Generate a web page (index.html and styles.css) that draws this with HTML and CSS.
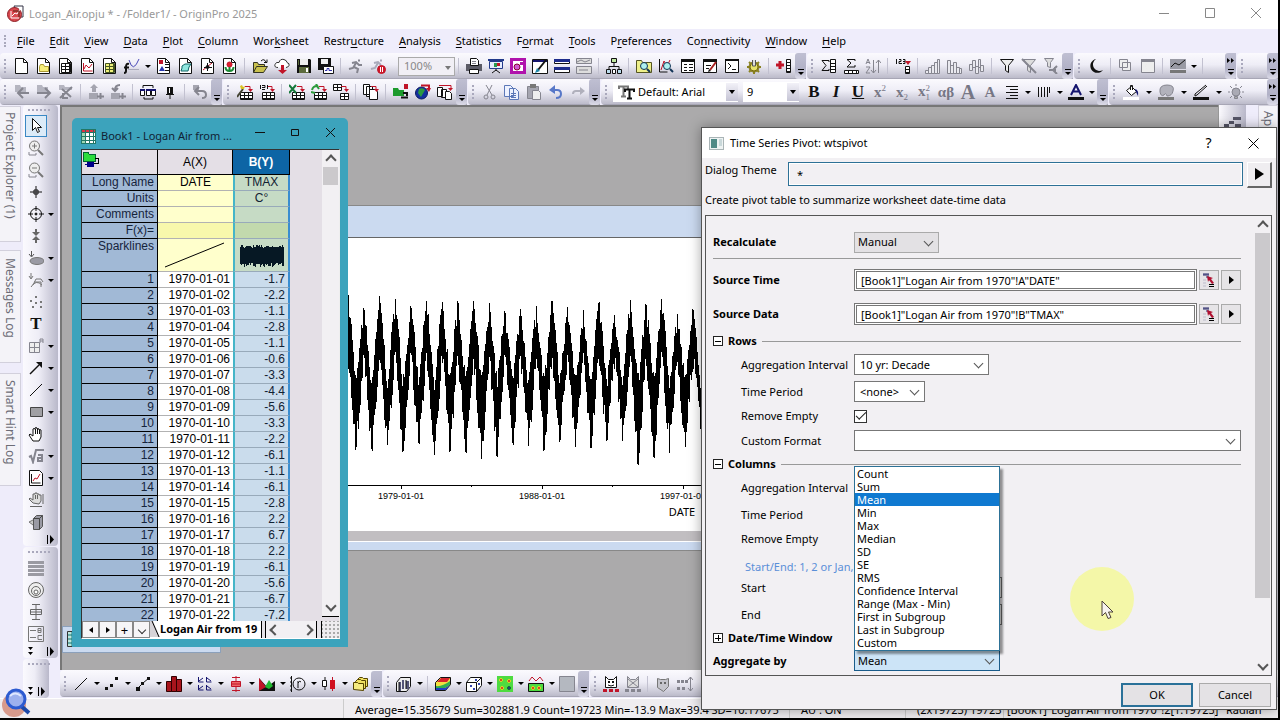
FILE: index.html
```html
<!DOCTYPE html>
<html lang="en">
<head>
<meta charset="utf-8">
<title>Logan_Air.opju * - /Folder1/ - OriginPro 2025</title>
<link rel="stylesheet" href="styles.css">
</head>
<body>
<div class="app">
  <header class="titlebar">
    <svg class="app-icon" width="17" height="18" viewBox="0 0 17 18" aria-hidden="true"><path d="M7 1h9v11h-5z" fill="#fff" stroke="#334"/><circle cx="7.500" cy="9.500" r="7" fill="#d8474d" stroke="#8d2028"/><path d="M4 6v7h8M5 11l3-3 2 1 3-5" fill="none" stroke="#fff"/><path d="M6 6h6v6" fill="none" stroke="#521"/></svg>
    <span class="title-text">Logan_Air.opju * - /Folder1/ - OriginPro 2025</span>
    <div class="window-buttons">
      <button aria-label="Minimize"><svg width="11" height="11"><path d="M0 5.500h10"/></svg></button>
      <button aria-label="Maximize"><svg width="11" height="11"><path d="M.5.5h9v9h-9z"/></svg></button>
      <button aria-label="Close"><svg width="11" height="11"><path d="M0 0l10 10M10 0L0 10"/></svg></button>
    </div>
  </header>

  <nav class="menubar">
    <a href="#"><u>F</u>ile</a><a href="#"><u>E</u>dit</a><a href="#"><u>V</u>iew</a><a href="#"><u>D</u>ata</a><a href="#"><u>P</u>lot</a><a href="#"><u>C</u>olumn</a><a href="#">Wor<u>k</u>sheet</a><a href="#">Restr<u>u</u>cture</a><a href="#"><u>A</u>nalysis</a><a href="#"><u>S</u>tatistics</a><a href="#">F<u>o</u>rmat</a><a href="#"><u>T</u>ools</a><a href="#">P<u>r</u>eferences</a><a href="#">Co<u>n</u>nectivity</a><a href="#"><u>W</u>indow</a><a href="#"><u>H</u>elp</a>
  </nav>

  <div class="toolbar-row">
    <div class="bar">
      <span class="tools" data-tools="new folder table graph ytable func* layout notes matrix image | open cloud save saveas | run stop"></span>
      <span class="combo zoom-combo"><select aria-label="Zoom" disabled><option>100%</option></select></span>
      <span class="tools" data-tools="| print slide magenta brush split graysplit | tree | findfolder findgraph sheet sheetedit prompt gear | addcol"></span>
      <button class="cap" aria-label="Toolbar options"></button>
    </div>
    <div class="bar">
      <span class="tools" data-tools="sumcol sumrow sortaz | numcol | bars1 bars2 bars3 | filter nofilter refilter"></span>
      <button class="cap" aria-label="Toolbar options"></button>
    </div>
    <div class="bar clipped">
      <span class="tools" data-tools="moon | moonpages moonwin | theme* |"></span>
      <button class="cap more" aria-label="More tools"></button>
    </div>
    <div class="bar rest"><button class="cap more" aria-label="More tools"></button></div>
  </div>

  <div class="toolbar-row">
    <div class="bar">
      <span class="tools" data-tools="back forward upfolder | addup adddown | linkwin pin | return"></span>
      <button class="cap" aria-label="Toolbar options"></button>
    </div>
    <div class="bar">
      <span class="tools" data-tools="wizard import123 | excel refresh database | pages | connector globe clonepages"></span>
      <button class="cap" aria-label="Toolbar options"></button>
    </div>
    <div class="bar">
      <span class="tools" data-tools="cut copy paste undo redo"></span>
      <button class="cap" aria-label="Toolbar options"></button>
    </div>
    <div class="bar">
      <span class="combo font-combo"><svg width="18" height="16" viewBox="0 0 18 16" aria-hidden="true"><path d="M1 5V2.500h9V5M5.500 3v9M3 12.500h5" fill="none" stroke="#777" stroke-width="2"/><path d="M7 8V5.500h9V8M11.500 6v8M9 14.500h5" fill="none" stroke="#111" stroke-width="2"/></svg><select aria-label="Font"><option>Default: Arial</option></select></span>
      <span class="combo size-combo"><select aria-label="Font size"><option>9</option></select></span>
      <span class="tools" data-tools="bold italic underline sup sub supsub greek bigger smaller align* vlines* fontcolor*"></span>
      <button class="cap" aria-label="Toolbar options"></button>
    </div>
    <div class="bar rest roomy">
      <span class="tools" data-tools="bucket* palette* pen* bulb"></span>
      <button class="cap more" aria-label="More tools"></button>
    </div>
  </div>

  <main class="workspace">
    <aside class="dock-tabs">
      <button class="t1">Project Explorer (1)</button>
      <button class="t2">Messages Log</button>
      <button class="t3">Smart Hint Log</button>
    </aside>
    <aside class="side-tools">
      <div class="vbar" data-tools="cursor zoomin zoomout cross target* squeeze mask* masklines* dots text annot* arrow* line* rect* hand sqrt* chart* handgray cube"><span class="vcap"><svg width="8" height="9"><path d="M1.500 0v9" stroke="#000"/><path d="M4 0l4 4.500L4 9z"/></svg></span></div>
      <div class="vbar" data-tools="stripes rings box bc"><span class="vcap both"><svg width="6" height="9"><path d="M0 0h5L2.500 3zM0 5h5L2.500 8z"/></svg><svg width="8" height="9"><path d="M1.500 0v9" stroke="#000"/><path d="M4 0l4 4.500L4 9z"/></svg></span></div>
      <div class="vbar short"><span class="vcap both"><svg width="6" height="9"><path d="M0 0h5L2.500 3zM0 5h5L2.500 8z"/></svg><svg width="8" height="9"><path d="M1.500 0v9" stroke="#000"/><path d="M4 0l4 4.500L4 9z"/></svg></span></div>
    </aside>
    <section class="center">
      <div class="desk">
        <div class="mdi">
          <div class="graph-window">
            <div class="graph-title"></div>
            <div class="graph-page">
              <svg id="plot" width="356" height="293" viewBox="0 0 356 293" role="img" aria-label="Daily maximum temperature against date"></svg>
            </div>
            <div class="graph-foot"></div>
          </div>
          <div class="minimized"><svg width="14" height="16"><path d="M.5.5h13v15H.5z" fill="#bfe6dc" stroke="#333"/><path d="M1 4h12M1 8h12M1 12h12M5 1v14" stroke="#177"/></svg></div>
        </div>
        <div class="right-dock"><div class="right-tools"><svg width="18" height="12" viewBox="0 0 18 12"><path d="M0 8h5v3H0zM5 5h5v3H5zM9 1h8v3H9zM11 8h6v3h-6z" fill="#556"/></svg></div><button class="right-tab">Ap</button></div>
      </div>
      <div class="toolbar-row bottom">
        <div class="bar narrow">
          <span class="tools" data-tools="line* scatter* linesym* columns* multi* boxred* area* polar* candle* stack"></span>
          <button class="cap" aria-label="Toolbar options"></button>
        </div>
        <div class="bar narrow">
          <span class="tools" data-tools="bars3d* | surface* scatter3d* contour* profile* grayimg"></span>
          <button class="cap" aria-label="Toolbar options"></button>
        </div>
        <div class="bar rest">
          <span class="tools" data-tools="cat graycat | shield measure"></span>
        </div>
      </div>
    </section>
  </main>

  <footer class="status">
    <svg class="orb" width="32" height="30" viewBox="0 0 32 30" aria-hidden="true"><circle cx="14" cy="17" r="12" fill="#d79a8c"/><path d="M20 17l9 8" stroke="#1d49a8" stroke-width="4"/><circle cx="16" cy="11" r="9" fill="#9db1ee" stroke="#2d5bd0" stroke-width="3"/><path d="M10 8q5-5 11 0" stroke="#dfe8ff" stroke-width="2" fill="none"/></svg>
    <span class="stats">Average=15.35679 Sum=302881.9 Count=19723 Min=-13.9 Max=39.4 SD=10.17675</span>
    <span class="au">AU : ON</span>
    <span class="dims">(2x19723) 19723</span>
    <span class="range">[Book1]"Logan Air from 1970"!2[1:19723]</span>
    <span class="angle">Radian</span>
  </footer>
</div>

<section class="book" aria-label="Book1">
  <header class="book-title">
    <svg width="15" height="15" viewBox="0 0 15 15" shape-rendering="crispEdges"><path d="M0 0h15v15H0z" fill="#fff"/><path d="M0 0h15v3H0z" fill="#d34"/><path d="M0 3h4v12H0z" fill="#9fd8b4"/><path d="M0 3.500h15M0 7.500h15M0 11.500h15M4.500 0v15M8.500 0v15M12.500 0v15M.5.5h14v14H.5z" fill="none" stroke="#276"/></svg>
    <span>Book1 - Logan Air from ...</span>
    <div class="book-buttons">
      <button aria-label="Minimize"><svg width="11" height="11"><path d="M0 5.500h10"/></svg></button>
      <button aria-label="Maximize"><svg width="11" height="11"><path d="M1.500 2.500h7v6h-7z"/></svg></button>
      <button aria-label="Close"><svg width="11" height="11"><path d="M1 1l9 9M10 1l-9 9"/></svg></button>
    </div>
  </header>
  <div class="sheet">
    <div class="grid-area">
      <table>
        <colgroup><col class="c0"><col class="c1"><col class="c2"></colgroup>
        <thead><tr><th class="corner"><svg width="18" height="17" viewBox="0 0 18 17" shape-rendering="crispEdges"><path d="M1 2h5l1 2h6v7H1z" fill="#2bdc3c" stroke="#063"/><path d="M13 8h3v5h-5" fill="none" stroke="#000"/><path d="M5 12h6v4H5zM3 14h2" fill="#008" stroke="#008"/></svg></th><th>A(X)</th><th class="sel">B(Y)</th></tr></thead>
        <tbody id="rows">
          <tr class="meta"><th>Long Name</th><td>DATE</td><td>TMAX</td></tr>
          <tr class="meta"><th>Units</th><td></td><td>C°</td></tr>
          <tr class="meta"><th>Comments</th><td></td><td></td></tr>
          <tr class="meta fx"><th>F(x)=</th><td></td><td></td></tr>
          <tr class="meta spark"><th>Sparklines</th><td><svg width="72" height="30"><path d="M7 28L66 4" stroke="#000"/></svg></td><td><svg id="spark" width="54" height="30"></svg></td></tr>
        </tbody>
      </table>
      <div class="vscroll"><i class="chev up"></i><i class="thumb"></i><i class="chev down"></i></div>
    </div>
    <div class="sheet-tabs">
      <button aria-label="Previous sheet"><i class="tri left"></i></button><button aria-label="Next sheet"><i class="tri"></i></button><button aria-label="Add sheet">+</button><button aria-label="Sheet list"><i class="vee"></i></button>
      <a class="sheet-tab" href="#"><svg width="10" height="16"><path d="M0 0h3l7 16H0z" fill="#d6d3d8"/><path d="M2 0l7 16" stroke="#000" fill="none"/></svg>Logan Air from 19</a>
      <span class="hscroll"><i class="chev left"></i><i class="chev right"></i></span>
      <span class="grow"></span>
    </div>
  </div>
</section>

<section class="dialog" role="dialog" aria-label="Time Series Pivot: wtspivot">
  <header class="dialog-title">
    <svg width="15" height="13" shape-rendering="crispEdges"><path d="M.5.5h14v12H.5z" fill="#eef3f3" stroke="#a9b4b6"/><path d="M2 2h6v9H2z" fill="#4f8a86"/><path d="M10 2h3v7h-3z" fill="#c9d8da"/></svg>
    <span>Time Series Pivot: wtspivot</span>
    <button aria-label="Help">?</button>
    <button aria-label="Close"><svg width="11" height="11"><path d="M.5.5l10 10M10.500.5l-10 10" stroke="#000"/></svg></button>
  </header>
  <div class="theme-row">
    <label for="theme">Dialog Theme</label>
    <input id="theme" value="*">
    <button class="raised" aria-label="Theme menu"><i class="tri big"></i></button>
  </div>
  <p class="description">Create pivot table to summarize worksheet date-time data</p>
  <div class="panel">
    <form class="fields">
      <div class="row first"><label class="strong" for="recalc">Recalculate</label><span class="drop gray w85"><select id="recalc"><option>Manual</option></select></span></div>
      <div class="row tall"><label class="strong" for="stime">Source Time</label><span class="source"><input id="stime" value='[Book1]"Logan Air from 1970"!A"DATE"'><button type="button" aria-label="Select time range"><svg class="pick" width="14" height="16"><use href="#pick"/></svg></button><button type="button" aria-label="Time options"><i class="tri"></i></button></span></div>
      <div class="row tall"><label class="strong" for="sdata">Source Data</label><span class="source"><input id="sdata" value='[Book1]"Logan Air from 1970"!B"TMAX"'><button type="button" aria-label="Select data range"><svg class="pick" width="14" height="16"><use href="#pick"/></svg></button><button type="button" aria-label="Data options"><i class="tri"></i></button></span></div>
      <h2><button type="button" class="fold" aria-label="Collapse Rows"></button>Rows</h2>
      <div class="row sub"><label for="ragg">Aggregation Interval</label><span class="drop w135"><select id="ragg"><option>10 yr: Decade</option></select></span></div>
      <div class="row sub"><label for="rper">Time Period</label><span class="drop w71"><select id="rper"><option>&lt;none&gt;</option></select></span></div>
      <div class="row sub low"><label for="remp">Remove Empty</label><input type="checkbox" id="remp" checked></div>
      <div class="row sub"><label for="rfmt">Custom Format</label><span class="drop full"><select id="rfmt"><option></option></select></span></div>
      <h2><button type="button" class="fold" aria-label="Collapse Columns"></button>Columns</h2>
      <div class="row sub"><span>Aggregation Interval</span></div>
      <div class="row sub"><span>Time Period</span></div>
      <div class="row sub low"><span>Remove Empty</span></div>
      <div class="hint">Start/End: 1, 2 or Jan,</div>
      <div class="row sub"><label for="start">Start</label><input id="start" class="plain"></div>
      <div class="row sub"><label for="end">End</label><input id="end" class="plain"></div>
      <h2 class="bare"><button type="button" class="fold plus" aria-label="Expand Date/Time Window"></button>Date/Time Window</h2>
      <div class="row last"><label class="strong" for="aggby">Aggregate by</label>
        <span class="drop active w146"><select id="aggby"><option>Mean</option></select>
          <ul class="options" role="listbox"><li>Count</li><li>Sum</li><li class="on">Mean</li><li>Min</li><li>Max</li><li>Median</li><li>SD</li><li>SE</li><li>RMS</li><li>Confidence Interval</li><li>Range (Max - Min)</li><li>First in Subgroup</li><li>Last in Subgroup</li><li>Custom</li></ul>
        </span></div>
    </form>
    <div class="panel-scroll"><i class="chev up"></i><i class="thumb"></i><i class="chev down"></i></div>
  </div>
  <footer class="dialog-actions"><button class="ok">OK</button><button>Cancel</button></footer>
</section>

<div class="spotlight"><svg width="14" height="20" viewBox="0 0 14 20"><path d="M1 1v15l3.500-3.500 2.500 6 3-1-2.500-5.500H12z" fill="#f7f3ee" stroke="#4c4238"/></svg></div>

<svg width="0" height="0" class="defs" aria-hidden="true"><symbol id="pick" viewBox="0 0 14 16"><path d="M1 2h6M1 3h6M4 5h3" stroke="#226" fill="none"/><path d="M5 4l6 2-2 1 3 4-2 1-3-4-1 2z" fill="#b01030"/><path d="M7 12.500h5M7 14.500h5" stroke="#000"/><path d="M1 8h3M1 11h3M1 14h3" stroke="#bbc"/></symbol></svg>
<script src="app.js"></script>
</body>
</html>
```

FILE: styles.css
```css
* { box-sizing: border-box; }
body { margin: 0; font: 11px/16px "Noto Sans", "Open Sans", sans-serif; color: #000; background: #000; overflow: hidden; position: relative; }
button, input, select { font: inherit; color: inherit; margin: 0; padding: 0; border-radius: 0; }
button { border: 0; background: none; }
select { appearance: none; border: 0; background: none; outline: 0; }
a { color: inherit; text-decoration: none; }
.defs { position: absolute; }

.app { height: 100vh; display: flex; flex-direction: column; border-right: 2px solid #000; border-bottom: 2px solid #000; background: #efedf9; }
.titlebar { flex: 0 0 29px; display: flex; align-items: center; background: #fff; color: #999; padding: 0 16px 2px 7px; }
.title-text { margin-left: 5px; flex: 1; }
.window-buttons { display: flex; gap: 35px; }
.window-buttons button { width: 11px; height: 11px; display: flex; }
.window-buttons path { stroke: #888; fill: none; }

.menubar { flex: 0 0 24px; display: flex; align-items: center; gap: 15px; padding-left: 17px; background: #efedfb; position: relative; }
.menubar u { text-underline-offset: 2px; }
.menubar::before, .bar::before { content: ""; position: absolute; left: 4px; top: 6px; bottom: 6px; border-left: 2px dotted #a9a8bc; }

.toolbar-row { flex: 0 0 26px; display: flex; gap: 1px; background: #efedfb; }
.bar { position: relative; display: flex; align-items: center; padding-left: 11px; height: 26px; background: linear-gradient(#fbfafe, #eeedf6 45%, #bdbccb 95%, #9a99a8); border-radius: 4px 0 0 4px; }
.bar.rest { flex: 1 1 0; min-width: 0; overflow: hidden; }
.bar.rest .cap, .bar.clipped .cap { margin-left: auto; }
.bar.clipped { min-width: 162px; }
.tools { display: flex; align-items: center; }
.tool { width: 22px; height: 22px; display: flex; align-items: center; justify-content: center; flex: none; }
.arrow { width: 10px; height: 22px; flex: none; display: flex; align-items: center; justify-content: center; }
.narrow .arrow { width: 9px; }
.roomy .arrow { width: 13px; }
.arrow::after { content: ""; border: 3px solid transparent; border-top-color: #000; border-bottom: 0; }
.sep { width: 8px; height: 16px; flex: none; background: linear-gradient(#c2c1d0, #c2c1d0) 3px 0 / 1px 100% no-repeat; }
.cap { position: relative; width: 11px; height: 26px; flex: none; background: linear-gradient(#bfbfd2, #b1b1c6 60%, #dcdbe8); border-radius: 3px 0 3px 3px; }
.cap::before { content: ""; position: absolute; left: 3px; bottom: 9px; width: 6px; border-top: 1px solid #000; }
.cap::after { content: ""; position: absolute; left: 3px; bottom: 4px; border: 3px solid transparent; border-top-color: #000; border-bottom: 0; }
.cap svg { position: absolute; left: 2px; top: 5px; }
.glyph { font: bold 17px/18px "Liberation Serif", serif; color: #111; }
.glyph.dim { color: #777785; font-size: 15px; }
.glyph.i { font-style: italic; }
.glyph.u { text-decoration: underline; }
.glyph.big { font-size: 20px; }
.glyph small { font: 9px/9px "Liberation Serif", serif; }
.glyph small.low { vertical-align: -3px; }
.glyph small.high { vertical-align: 6px; }
.glyph .stack { display: inline-flex; flex-direction: column; vertical-align: middle; }

.combo { display: flex; height: 20px; background: #fff; position: relative; align-items: center; }
.combo select { width: 100%; height: 20px; }
.combo::after { content: ""; position: absolute; right: 0; top: 1px; bottom: 1px; width: 12px; background: linear-gradient(#f2f1f8, #c5c4d5); }
.combo::before { content: ""; position: absolute; z-index: 1; right: 3px; top: 8px; border: 3px solid transparent; border-top: 4px solid #000; border-bottom: 0; }
.zoom-combo { width: 57px; margin-left: 9px; border: 1px solid #aaa; background: #f1eff5; height: 19px; }
.zoom-combo select { padding-left: 5px; color: #888; opacity: 1; height: 17px; }
.zoom-combo::after { background: none; }
.zoom-combo::before { border-top-color: #777; }
.font-combo { width: 125px; margin-left: 1px; padding-left: 5px; }
.font-combo svg { flex: none; }
.font-combo select { padding-left: 2px; }
.size-combo { width: 56px; margin: 0 4px 0 5px; }
.size-combo select { padding-left: 4px; }

.workspace { flex: 1; min-height: 0; display: flex; }
.dock-tabs { flex: 0 0 23px; display: flex; flex-direction: column; background: #eeecfa; padding-top: 1px; }
.dock-tabs button, .right-tab { writing-mode: vertical-rl; font-size: 12px; color: #6c6c76; text-align: left; width: 21px; border: 1px solid #d2d0dc; border-left: 0; background: #f4f3f8; padding-top: 5px; }
.dock-tabs .t1 { height: 136px; }
.dock-tabs .t2 { height: 113px; margin-top: 8px; padding-top: 7px; }
.dock-tabs .t3 { height: 113px; margin-top: 10px; padding-top: 6px; }
.side-tools { flex: 0 0 37px; display: flex; flex-direction: column; gap: 1px; background: #efedfb; }
.vbar { width: 35px; padding: 10px 0 0 1px; position: relative; background: linear-gradient(90deg, #fbfafe, #eeedf6 45%, #b9b8ca); border-radius: 4px; }
.vbar::before { content: ""; position: absolute; left: 5px; width: 22px; top: 4px; border-top: 2px dotted #a9a8bc; }
.vbar .line { display: flex; height: 22px; }
.vbar .line .tool { margin-left: 1px; }
.vbar .line .arrow { width: 7px; }
.vbar .line .tool.on { border: 1px solid #3a88c4; background: #dcebf8; width: 22px; }
.vcap { display: flex; justify-content: flex-end; align-items: center; padding-right: 4px; height: 13px; }
.vcap.both { justify-content: space-between; padding-left: 4px; }
.vbar.short { width: 26px; padding-top: 26px; }

.center { flex: 1; min-width: 0; display: flex; flex-direction: column; }
.desk { flex: 1; min-height: 0; display: flex; }
.mdi { flex: 1; position: relative; overflow: hidden; background: #abaaab; border-left: 2px solid #777; border-top: 2px solid #777; }
.graph-window { position: absolute; left: 240px; right: 0; top: 98px; border-top: 1px solid #888; }
.graph-title { height: 32px; background: #cbdaf0; border-bottom: 1px solid #666; }
.graph-page { height: 293px; background: #fff; padding-left: 46px; }
.graph-page svg { display: block; }
.graph-page text { font-family: "Liberation Sans", sans-serif; font-size: 9px; text-anchor: middle; }
.graph-page text.axis { font: 11px "Noto Sans", sans-serif; }
.graph-foot { height: 20px; background: #cbdaf0; border-top: 10px solid #c1bec1; border-bottom: 1px solid #888; box-shadow: inset 0 1px #fff; }
.minimized { position: absolute; left: 0; top: 519px; width: 159px; height: 27px; border: 1px solid #8ba0bb; background: #cbdaf0; padding: 4px; }
.right-dock { width: 60px; display: flex; background: #efedfb; }
.right-tools { width: 28px; background: linear-gradient(90deg, #fbfafe, #b9b8ca); padding: 11px 5px; border-left: 1px solid #999; }
.right-tab { margin-left: 12px; border-left: 1px solid #d2d0dc; }
.bottom { flex: 0 0 28px; }
.bottom .bar { padding-left: 10px; height: 27px; }

.status { flex: 0 0 20px; display: flex; align-items: center; position: relative; background: #efedf0; border-top: 1px solid #fff; padding-left: 343px; }
.status .orb { position: absolute; left: 0; bottom: 0; }
.status span { border-left: 1px solid #ccc; padding-left: 11px; white-space: nowrap; height: 19px; line-height: 22px; }
.status .stats { width: 446px; }
.status .au { width: 116px; }
.status .dims { width: 98px; }
.status .range { width: 211px; padding-left: 3px; }

.book { position: absolute; left: 72px; top: 118px; width: 276px; height: 529px; background: #3ca3bc; border-radius: 5px 5px 0 0; padding: 0 8px 8px 9px; display: flex; flex-direction: column; }
.book-title { flex: 0 0 31px; display: flex; align-items: center; gap: 5px; padding-top: 5px; color: #123; }
.book-buttons { margin-left: auto; margin-bottom: 8px; display: flex; gap: 24px; padding-right: 4px; }
.book-buttons button { width: 11px; height: 11px; display: flex; }
.book-buttons path { stroke: #111; fill: none; }
.sheet { flex: 1; min-height: 0; display: flex; flex-direction: column; border: 1px solid #333; border-right-color: #eee; border-bottom-color: #fff; background: #e4dfe6; }
.grid-area { flex: 1; min-height: 0; overflow: hidden; display: flex; justify-content: space-between; }
table { border-collapse: separate; border-spacing: 0; table-layout: fixed; width: 208px; font: 12px/15px "Liberation Sans", sans-serif; align-self: flex-start; }
.c0 { width: 76px; } .c1 { width: 75px; } .c2 { width: 57px; }
td, th { padding: 0 3px; height: 16px; font-weight: normal; text-align: right; border-bottom: 1px solid #b2b2b2; overflow: hidden; white-space: nowrap; }
thead th { height: 25px; text-align: center; background: #e4dfe6; border-right: 1px solid #000; border-bottom: 1px solid #000; }
thead .corner { text-align: left; padding: 0; vertical-align: top; }
thead .corner svg { display: block; }
thead .sel { background: #0d65a5; color: #fff; font-weight: bold; }
tbody th { background: #a1b9d6; border-right: 1px solid #000; border-bottom: 1px solid #000; color: #16243c; }
td { background: #fff; }
td:nth-child(2) { padding-right: 3px; }
td:nth-child(3) { background: #cadcec; border-left: 2px solid #45b5c8; border-right: 2px solid #3a8dd0; color: #123; border-bottom-color: #98aaba; }
.meta td { text-align: center; background: #ffffcc; }
.meta td:nth-child(3) { background: #c6dbc5; }
.meta.fx td { background: #f8f8ac; }
.meta.fx td:nth-child(3) { background: #c2d9ad; }
.spark th, .spark td { height: 33px; vertical-align: top; }
.spark td, .spark td:nth-child(3) { padding: 0; }
.spark svg { display: block; }
.vscroll, .panel-scroll { width: 17px; background: #f2f0f3; display: flex; flex-direction: column; align-items: center; }
.vscroll .thumb { width: 15px; height: 18px; background: #cbc9cc; }
.vscroll { border-bottom: 1px solid #000; margin-bottom: 4px; }
.chev { width: 17px; height: 17px; flex: none; display: flex; align-items: center; justify-content: center; }
.chev::before { content: ""; width: 6px; height: 6px; border: solid #555; border-width: 2px 0 0 2px; transform: rotate(45deg); }
.chev.up::before { margin-top: 3px; }
.chev.down { margin-top: auto; }
.chev.down::before { transform: rotate(225deg); margin-bottom: 4px; }
.chev.left::before { transform: rotate(-45deg); }
.chev.right::before { transform: rotate(135deg); }
.tri { display: inline-block; border: 4px solid transparent; border-left: 5px solid #000; border-right: 0; }
.tri.left { border-left: 0; border-right: 5px solid #000; }
.tri.big { border-width: 6px 0 6px 9px; }
.sheet-tabs { flex: 0 0 17px; display: flex; background: #e6e3e8; }
.sheet-tabs button { width: 17px; border: 1px solid #888; background: #f6f5f7; display: flex; align-items: center; justify-content: center; line-height: 12px; font-size: 13px; }
.sheet-tabs .tri { border-top-width: 3px; border-bottom-width: 3px; border-left-width: 4px; }
.sheet-tabs .tri.left { border-left-width: 0; border-right-width: 4px; }
.vee::before { content: ""; display: block; width: 5px; height: 5px; border: solid #333; border-width: 0 1px 1px 0; transform: rotate(45deg); }
.sheet-tab { width: 112px; background: #fff; font-weight: bold; display: flex; overflow: hidden; white-space: nowrap; border-right: 1px solid #000; }
.sheet-tab svg { flex: none; }
.hscroll { width: 52px; display: flex; justify-content: space-between; margin-left: 3px; background: #f2f0f3; border: solid #000; border-width: 0 1px; }
.grow { flex: 1; margin-left: 4px; border-left: 1px solid #000; background: radial-gradient(circle at 1px 1px, #aaa 1px, transparent 1px) right 2px bottom 2px / 4px 4px #eeecef; }

.dialog { position: absolute; left: 701px; top: 127px; width: 576px; height: 583px; border: 1px solid #555; background: #f2f0f3; display: flex; flex-direction: column; box-shadow: 0 0 12px rgba(0, 0, 0, .35); }
.dialog-title { flex: 0 0 30px; background: #fff; display: flex; align-items: center; padding: 0 17px 0 7px; gap: 6px; }
.dialog-title span { flex: 1; }
.dialog-title button { width: 11px; display: flex; justify-content: center; font-size: 14px; }
.dialog-title button + button { margin-left: 28px; }
.theme-row { display: flex; padding: 4px 4px 0 3px; }
.theme-row label { width: 83px; }
.theme-row input { flex: 1; min-width: 0; height: 24px; border: 1px solid #2d7196; background: #f2f0f3; padding: 0 8px; box-shadow: inset 0 0 0 1px #fff; outline: 0; }
.raised { width: 25px; height: 26px; margin-left: 4px; padding-top: 3px; border: 1px solid #fff; border-right: 2px solid #666; border-bottom: 2px solid #666; background: #efedf0; }
.description { margin: 4px 3px 7px; }
.panel { margin: 0 4px 0 3px; height: 461px; border: 1px solid #555; display: flex; position: relative; }
.fields { flex: 1; padding: 0 13px 0 7px; display: flex; flex-direction: column; }
.row { height: 27px; display: grid; grid-template-columns: 141px 1fr; align-items: center; flex: none; }
.row.first { height: 43px; padding-top: 10px; border-bottom: 1px solid #999; margin-bottom: 4px; }
.row.tall { height: 34px; }
.row.sub { grid-template-columns: 113px 1fr; padding-left: 28px; white-space: nowrap; }
.row.low { height: 22px; }
.row.last { height: 25px; }
.strong, h2 { font-weight: bold; }
h2 { margin: 0; height: 20px; font-size: 11px; line-height: 20px; display: flex; align-items: center; gap: 5px; flex: none; }
h2::after { content: ""; flex: 1; height: 1px; background: #999; }
h2.bare::after { background: none; }
.fold { width: 10px; height: 10px; border: 1px solid #222; display: block; background: linear-gradient(#000, #000) center / 6px 1px no-repeat #fff; flex: none; }
.fold.plus { background: linear-gradient(#000, #000) center / 6px 1px no-repeat, linear-gradient(#000, #000) center / 1px 6px no-repeat, #fff; }
.hint { height: 24px; padding: 9px 0 0 32px; color: #5b8fd8; white-space: nowrap; }
.drop { position: relative; display: block; height: 21px; border: 1px solid #777; background: #fff; }
.drop select { width: 100%; height: 19px; padding: 0 5px; display: block; }
.drop::after { content: ""; position: absolute; right: 6px; top: 5px; width: 6px; height: 6px; border: solid #555; border-width: 0 1px 1px 0; transform: rotate(45deg); pointer-events: none; }
.gray { background: #e3e1e4; border-color: #aaa; }
.gray select { padding: 0 3px; }
.active { background: #cce4f7; border-color: #1a5c8a; }
.active select { padding: 0 3px; }
.w71 { width: 71px; } .w85 { width: 85px; } .w135 { width: 135px; } .w146 { width: 146px; }
.source { display: flex; gap: 2px; }
.source input { flex: 1; min-width: 0; height: 22px; border: 3px double #777; background: #fff; padding-left: 4px; outline: 0; }
.source button { width: 20px; height: 20px; border: 1px solid #aaa; background: #e6e4e7; display: flex; align-items: center; justify-content: center; align-self: center; }
input[type="checkbox"] { appearance: none; width: 13px; height: 13px; border: 1px solid #333; background: #fff; display: grid; place-items: center; }
input[type="checkbox"]:checked::before { content: ""; width: 9px; height: 4px; border: solid #222; border-width: 0 0 1px 1px; transform: rotate(-45deg); margin-bottom: 3px; }
.plain { width: 148px; height: 21px; border: 1px solid #777; background: #fff; }
.options { position: absolute; left: -1px; bottom: 19px; width: 146px; margin: 0; padding: 0 0 1px; list-style: none; background: #fff; border: 1px solid #2d7196; box-shadow: 3px 3px 2px rgba(0, 0, 0, .4); line-height: 13px; }
.options li { padding-left: 2px; height: 13px; }
.options .on { background: #0f79d0; color: #fff; }
.panel-scroll .thumb { width: 15px; height: 365px; background: #cbc9cc; }
.dialog-actions { display: flex; justify-content: flex-end; gap: 6px; padding: 7px 5px 0; }
.dialog-actions button { width: 72px; height: 24px; border: 1px solid #aaa; background: #e4e2e5; }
.dialog-actions .ok { border: 2px solid #2a7199; }

.spotlight { position: absolute; left: 1070px; top: 567px; width: 64px; height: 64px; border-radius: 50%; background: #f4f7a8; padding: 33px 0 0 31px; }
```

FILE: app.js
```js
const p = (d, fill = 'none', stroke = '#111', w = 1) =>
  `<path d="${d}" fill="${fill}" stroke="${stroke}" stroke-width="${w}"/>`;
const f = (d, fill = '#111') => `<path d="${d}" fill="${fill}"/>`;
const c = (x, y, r, fill = 'none', stroke = '#111') => `<circle cx="${x}" cy="${y}" r="${r}" fill="${fill}" stroke="${stroke}"/>`;
const G = '#85858f', R = '#c01428', N = '#14146e';
const page = p('M1.500.5h8l4 4v11h-12z', '#fff') + p('M9.500.5v4h4');
const grid = (x, y, w, h, col = '#111', bg = '#fff') => {
  let d = `M${x}.5 ${y}.5h${w}v${h}h-${w}z`;
  for (let i = 3; i < h; i += 3) d += `M${x} ${y + i}.5h${w}`;
  for (let i = 4; i < w; i += 4) d += `M${x + i}.5 ${y}v${h}`;
  return p(d, bg, col);
};
const redArrow = p('M8 2.500h5v3', 'none', R) + f('M11 5h5l-2.500 3z', R);
const importTo = grid(3, 8, 12, 7) + redArrow;
const lens = (x, y) => c(x, y, 3.5, '#aef0f0', '#135') + p(`M${x + 3} ${y + 3}l3 3`, 'none', '#135', 2);
const txt = (cls, html) => ({ html: `<span class="glyph ${cls}">${html}</span>` });

const icons = {
  new: page,
  folder: page + p('M3.500 8.500l1-2h3l1 2h4v5h-9z', '#f6ee7a', '#a93'),
  table: page + grid(3, 5, 9, 9),
  graph: page + p('M3.500 5v8h9M4 11l2-4 3 3 3-4', 'none', R),
  ytable: page + grid(3, 5, 9, 9, '#452', '#eef07a'),
  func: p('M5 2q4 14 10-1', 'none', '#4a4ab8', 1) + p('M5 6q-3-1-3 3v4q0 2-2 2M0 9.500h5', 'none', '#111', 2) + p('M4 11.500h11', 'none', '#aab'),
  layout: page + f('M3 2h4v4H3z', R) + p('M9 6.500h4M9 9.500h4M9 12.500h4') + f('M3 13l3-5 3 5z', '#2838b0'),
  notes: page + p('M4 8l3-2h6l-2 3-1 4H3l1-3z', '#8fe6de', '#166'),
  matrix: page + p('M3 12l9-7', 'none', R) + p('M7.500 5v8M4 9.500h8') + c(7.5, 9, 1.5, '#111'),
  image: page + c(7.5, 6.5, 2.5, '#e02030', R) + p('M7.500 9v5M3.500 9q0 4 4 4 4 0 4-4', 'none', '#1a8a34', 2),
  open: p('M1.500 14.500v-10h4l1 2h6v2M1.500 14.500l3-6h11l-4 6z', '#c9c14e', '#332') + p('M9 3q3-3 5 1M12 4.500h3v-3'),
  cloud: p('M4 9.500q-4 0-3-3 1-3 4-2 1-4 5-3 3 1 3 3 3 1 2 3-1 2-3 2', '#fff', '#333') + f('M7 7h3v5h3l-4.500 4L4 12h3z', R),
  save: f('M1 1h13l1 1v13H1z', '#111') + f('M3 9h10v6H3z', '#5b6a3c') + f('M4 1h8v6H4z', '#eee') + f('M10 10h2v4h-2z', '#fff') + f('M2 2h1v5H2z', '#5b6a3c'),
  saveas: f('M0 0h13v12H0z') + f('M3 1h7v5H3z', '#eee') + p('M5.500 8.500h10v7h-10z', '#fff') + p('M7 12.500h2v-2h2v2h3', 'none', '#33a'),
  run: p('M10 2.500h2M4 5l4-1 3 3h3M8 5l-3 5-4 1M6 9l4 2-1 4', 'none', G, 2),
  stop: p('M10 2.500h2M4 5l4-1 3 3M8 5l-3 5-4 1', 'none', '#aab', 2) + c(11.5, 11.5, 4, '#d01828', R) + p('M10.500 9v5M12.500 9v5', 'none', '#fff'),
  print: f('M0 6h16v7H0z', '#5b5b66') + p('M4.500.5h6l2 2v5h-8z', '#fff') + p('M3.500 11.500h9v4h-9z', '#fff') + p('M6 3.500h4M6 5.500h4', 'none', G),
  slide: f('M0 1h16v2H0z', '#223a8a') + p('M1.500 3.500h13v7h-13z', '#e5ecff', '#223a8a') + f('M6 5h3v4H6z', '#289a50') + f('M9 5h3v3H9z', R) + p('M8 11v2M4 15l4-3 4 3', 'none', '#111'),
  magenta: f('M0 0h16v16H0z', '#b012ac') + f('M3 3h10v10H3z', '#fff') + c(7, 9, 3, '#d05ad0', '#803') + f('M10 4h3v3h-3z', '#b012ac'),
  brush: p('M.5 1.500h15v14H.5z', '#fff') + f('M1 2h14v2H1z', N) + p('M14 2L6 12', 'none', '#111', 2) + f('M3 15l2-5 3 3z', '#28a'),
  split: p('M.5 1.500h15v4H.5zM.5 9.500h15v5H.5z', '#fff') + f('M0 1h16v3H0zM0 9h16v3H0z', '#1d2c8c'),
  graysplit: p('M.5.5h15v5H.5zM.5 8.500h15v7H.5z', '#ddd', G) + p('M1 4l4-2 4 2 5-2M3 12h9', 'none', G),
  tree: p('M8 5v3M3 11V8.500h10V11') + p('M5.500.5h5v4h-5z', '#bfe8a0') + p('M.5 11.500h4v4h-4zM11.500 11.500h4v4h-4z', '#bde') + p('M6.500 11.500h3v4h-3z', '#fff'),
  findfolder: p('M.5 14.500v-12h5l1 2h9v10z', '#eef08a', '#552') + lens(8, 8),
  findgraph: p('M1.500 1v13h8', 'none', '#111') + p('M3 12l3-9 3 5 3-6', 'none', R) + lens(9, 8),
  sheet: p('M1.500 1.500h13v13h-13z', '#fff') + f('M1 1h14v3H1z') + p('M4 6.500h3M9 6.500h4M4 9.500h3M9 9.500h4M4 12.500h3M9 12.500h4'),
  sheetedit: p('M1.500 1.500h13v13h-13z', '#fff') + f('M1 1h14v3H1z') + p('M4 7.500h5M4 10.500h3') + p('M14 4l-6 8', 'none', '#a22', 2) + f('M6 14l1-3 2 2z'),
  prompt: p('M1.500 1.500h13v13h-13z', '#fff') + f('M1 1h14v2H1z') + p('M4 5l3 3-3 3M8 11.500h4'),
  gear: c(8, 9, 5, '#d8d850', '#776a10') + p('M8 2v14M1 9h14M3 4l10 10M13 4L3 14', 'none', '#8a8220', 2) + c(8, 9, 4, '#e6e26a', '#776a10') + p('M6.500 2v6h3V2', '#ddd', '#555'),
  addcol: p('M4 3v8M0 7h8', 'none', R, 3) + grid(10, 1, 4, 13),
  sumcol: p('M8 4V2.500H1l4 5-4 5h7V11', 'none', '#111') + p('M9.500 1.500h5v13h-5zM10 5.500h4M10 8.500h4M10 11.500h4', '#fff'),
  sumrow: p('M12 3V1.500H4l4 3.500-4 4h8V7', 'none', '#111') + grid(1, 12, 14, 3),
  sortaz: p('M1 6l2-5 2 5M2 4.500h3M1 9h4l-4 6h4M8.500 2v13M6 12l2.500 3 2.500-3M13.500 15V2M11 5l2.500-3L16 5', 'none', G),
  numcol: p('M1.500 1v5M4 1.500h2v2H4v2h3M8 1.500h2v4H8M8 3.500h2') + f('M10 3h6l-3 4z', R) + grid(10, 8, 4, 7),
  bars1: p('M.5 15.500v-3h3v3zM3.500 15.500v-6h3v6zM6.500 15.500v-8h3v8zM9.500 15.500v-11h3v11zM12.500 15.500V1.500h2v14z', '#e9e9ef', G),
  bars2: p('M.5 15.500V2.500h3v13zM3.500 15.500v-8h3v8zM6.500 15.500v-11h3v11zM9.500 15.500v-6h3v6zM12.500 15.500v-5h2v5z', '#e9e9ef', G),
  bars3: p('M.5 12.500v-6h3v6zM3.500 9.500v-7h3v7zM6.500 15.500v-7h3v7zM9.500 9.500v-8h2v8zM11.500 13.500v-6h3v6z', '#e9e9ef', G),
  filter: p('M1.500 1.500h13l-5 6v7l-3-2v-5z', '#eee'),
  nofilter: p('M2.500 1.500h12l-5 6v7l-3-2v-5z', '#ddd', G) + p('M1 1l14 14', 'none', G, 2),
  refilter: p('M1.500.5h9l-3 4v5l-3-1v-4z', '#ddd', G) + p('M6 12h4M12 9v6M14 8l-4 4 4 4', 'none', G, 2),
  moon: f('M8 1a7 7 0 1 0 7 11A6 6 0 0 1 8 1z'),
  moonpages: p('M1.500 1.500h8v8h-8zM4.500 4.500h8v8h-8z', '#eee', G) + f('M11 6a4 4 0 1 0 5 7 4 4 0 0 1-5-7z', '#555'),
  moonwin: p('M1.500 1.500h13v13h-13z', '#eee', G) + f('M1 1h14v3H1z', G) + f('M8 5a4 4 0 1 0 4 7 4 4 0 0 1-4-7z', '#555'),
  theme: f('M0 1h16v10H0z', '#999aa4') + p('M1 9l4-4 4 2 6-5') + f('M0 12h16v3H0z', '#777'),
  back: f('M1 1h5l1 2h5v5H1z', '#b5b5c0') + p('M15 9H4M9 4L4 9l5 5', 'none', G, 2),
  forward: f('M1 1h5l1 2h5v5H1z', '#b5b5c0') + p('M1 9h12M9 4l5 5-5 5', 'none', G, 2),
  upfolder: f('M1 1h5l1 2h7v3H1z', '#b5b5c0') + p('M2 14L14 3M4 5l9 8M5 9v5h5', 'none', G, 2),
  addup: f('M1 9h9v6H1zM4 8V4H2l4-4 4 4H8v4z', '#a5a5b0') + p('M12.500 9v6M9 12.500h7', 'none', G, 2),
  adddown: f('M1 9h9v6H1z', '#a5a5b0') + p('M10 1Q5 1 5 6M2 4l3 3 3-3M12.500 9v6M9 12.500h7', 'none', G, 2),
  linkwin: p('M.5 5.500h4v6h-4zM6.500 5.500h4v6h-4zM11.500 5.500h4v6h-4z', '#fff') + p('M3 4V1.500h10V4M4 13v2h9v-2') + f('M0 5h5v2H0zM6 5h5v2H6zM11 5h5v2h-5z', N),
  pin: f('M5 3h6v7H5z') + p('M4 10.500h8M8 11v4') + f('M7 4h1v5H7z', '#fff'),
  return: f('M1 1h6v5H1z', '#a5a5b0') + p('M4 7h6q4 0 4 4 0 3-4 3M7 3L3 7l4 4', 'none', G, 2),
  wizard: importTo + p('M0 13L6 5', 'none', '#443', 2) + f('M5 1l1 2 2-1-1 3H4L3 2z', '#d8c020'),
  import123: importTo + p('M1.500 1v4M3 1.500h3v2H3M3 5.500h3M8.500 1v4') ,
  excel: importTo + p('M0 1l7 8M7 1L0 9', 'none', '#15783a', 2),
  refresh: importTo + p('M1 6q1-4 5-4l2 3M5 0l2 3M0 8l4 1', 'none', '#2a9a3a', 2),
  database: grid(0, 0, 8, 6) + grid(7, 9, 8, 6) + redArrow,
  pages: p('M.5.5h6v10h-6zM3.500 2.500h6v10h-6z', '#fff') + p('M6.500 5.500h6l2 2v8h-8z', '#fff') + redArrow,
  connector: f('M0 4h5l1 2h5v6H0z', '#1c9a2c') + f('M11 0h4v5h-4z', R) + p('M10 9h4v3M8 13.500h7', 'none', '#111', 2),
  globe: c(6.5, 9, 6, '#1530a0', '#0a1a60') + f('M4 5q4-2 6 1l-4 7-3-4z', '#2c9a40') + p('M6 1.500h8v3', 'none', R, 2) + f('M11 4h5l-2 4z', R),
  clonepages: p('M.5 3.500h5v9h-5zM4.500 5.500h5v8h-5z', '#fff') + p('M8.500 7.500h4l2 2v6h-6z', '#fff') + p('M2 1.500h12v3', 'none', R) + f('M11 4h5l-2.500 3z', R),
  cut: p('M4 1l6 10M10 1L5 11', 'none', G) + c(4, 13, 2, 'none', G) + c(11, 13, 2, 'none', G),
  copy: p('M.5 1.500h6l3 3v8h-9zM5.500 4.500h6l3 3v8h-9z', '#eef2ff', '#5c78b8') + p('M7 9.500h5M7 11.500h5M7 13.500h5', 'none', '#5c78b8'),
  paste: p('M1.500 2.500h11v12h-11z', '#a5a5b0', G) + p('M6.500 6.500h6l2 2v7h-8z', '#eee', G) + f('M4 0h6v4H4z', '#777'),
  undo: p('M4 6h5q4 0 4 4 0 4-5 4', 'none', '#5878c8', 2) + f('M7 1v9L1 6z', '#5878c8'),
  redo: p('M11 7H6q-3 0-3 3', 'none', '#b0b0bc', 2) + f('M10 3v8l5-4z', '#b0b0bc'),
  bold: txt('', 'B'), italic: txt('i', 'I'), underline: txt('u', 'U'),
  sup: txt('dim', 'x<small class="high">2</small>'), sub: txt('dim', 'x<small class="low">2</small>'),
  supsub: txt('dim', 'x<span class="stack"><small>2</small><small>1</small></span>'),
  greek: txt('dim', 'αβ'), bigger: txt('dim big', 'A'), smaller: txt('dim', 'A'),
  align: p('M2 2.500h12M6 5.500h8M2 8.500h12M6 11.500h8M2 14.500h12'),
  vlines: p('M2.500 3v10M5.500 3v10M8.500 3v10M11.500 3v10M13.500 3v6'),
  fontcolor: p('M3 11L8 1l5 10M5 7.500h6', 'none', N, 2) + f('M0 13h16v3H0z'),
  bucket: p('M3.500 6.500l5-4 5 5-5 4z', '#fff') + p('M7.500 6V1.500h2V6') + f('M12 5q4 1 3 7l-2-4z', N) + f('M0 13h16v3H0z', '#fff'),
  palette: p('M2 8Q1 1 9 1t6 6q-1 5-6 5Q8 8 6 11q-3 2-4-3z', '#b2b2bc', G) + f('M0 13h16v3H0z', '#777'),
  pen: p('M2 10L13 1M4 11l10-9M2 10v2l2-1') + f('M0 13h16v3H0z'),
  bulb: c(8, 8, 4, '#aaaab4', G) + p('M6.500 12.500h3v2h-3zM8 0v2M0 8h2M14 8h2M2 2l2 2M14 2l-2 2M2 14l2-2M14 14l-2-2', '#aaa', G),
  cursor: p('M4.500.5v12l3-3 2 5 2-1-2-4h4z', '#fff'),
  zoomin: c(6.5, 6, 5, '#eee', '#777') + p('M4 6h5M6.500 3.500v5', 'none', '#777') + p('M10 10l5 5', 'none', '#777', 2) + p('M1 12v3h7v-2', 'none', G),
  zoomout: c(6.5, 6, 5, '#eee', '#777') + p('M4 6h5', 'none', '#777') + p('M10 10l5 5', 'none', '#777', 2) + p('M1 12v3h7v-2', 'none', G),
  cross: p('M8 2v12M2 8h12M6 6h4v4H6z'),
  target: c(8, 8, 5.5) + p('M8 0v5M8 11v5M0 8h5M11 8h5') + c(8, 8, 1, '#111'),
  squeeze: p('M8 1v5M8 10v5', 'none', '#666', 2) + f('M4 4h8l-4 4zM4 12h8L8 8z', '#666'),
  mask: `<ellipse cx="9" cy="11" rx="7" ry="3.500" fill="#9a9aa4" stroke="#777"/>` + p('M3.500 1v5M1 4l2.500 3L6 4', 'none', '#555'),
  masklines: p('M3 1v5M1 4l2 3 2-3M5 13l3-6h5l2 3M3 15q5-8 11-2M6 10h7v5', 'none', '#777'),
  dots: f('M7 2h2v2H7zM2 6h2v2H2zM12 7h2v2h-2zM7 8h2v2H7zM4 12h2v2H4zM12 12h2v2h-2z', '#777'),
  text: txt('', 'T'),
  annot: p('M1.500 4.500h10v10h-10zM1 9.500h10M6.500 4v10', '#eee', G) + p('M12 5V1h3v4M12 3h3', 'none', G),
  arrow: p('M2 14L11 5', 'none', '#111', 1.5) + f('M8 2h6v6z'),
  line: p('M2 14L14 2', 'none', '#111'),
  rect: p('M2.500 3.500h12v9h-12z', '#a0a0a4', '#444'),
  hand: p('M5 15l-4-6 1-1 3 2V3q1-1 2 0V2q1-1 2 0v1q1-1 2 0v1q1-1 2 0v7l-2 4z', '#fff') + p('M7.500 3v5M9.500 3v5M11.500 4v4'),
  sqrt: p('M1 9l2-1 2 6L8 2h8M10 7h4v6h-4v-3h4', 'none', G, 2),
  chart: p('M1.500.5h10l3 3v12h-13z', '#fff') + p('M3.500 4v9h9') + p('M5 11l2-3 2 1 3-5', 'none', R),
  handgray: p('M5 11L1 7l1-1 3 2V2h2v-1h2v1h2v1h2v6l-2 3zM2 14.500h12M15 2v10', '#ddd', '#666') + p('M7.500 3v4M9.500 3v4', 'none', '#666'),
  cube: p('M5.500 4.500l3-3h6v11l-3 3h-6z', '#9a9aa4', '#555') + p('M5.500 4.500h6v11M11.500 4.500l3-3', 'none', '#444') + p('M5 6L1 8l4 3', '#ccc', '#777'),
  stripes: f('M0 1h16v3H0zM0 5h16v3H0zM0 9h16v3H0zM0 13h16v3H0z', '#9a9aa2'),
  rings: c(8, 8, 7.5, '#eee', '#666') + c(8, 9, 4.5, '#eee', '#666') + c(8, 10, 2, '#fff', '#666'),
  box: p('M8 0v16M4 .5h8M4 15.500h8M2.500 5.500h11v5h-11zM2 8h12', 'none', '#666'),
  bc: p('M.5.5h15v15H.5zM2 4.500h6M2 11.500h6M10 2.500h3v4h-3zM10 4.500h3M14 9.500h-4v4h4', 'none', '#777'),
  scatter: f('M1 11h3v3H1zM6 8h3v3H6zM11 1h3v3h-3z'),
  linesym: p('M2 13L8 7l6-5') + f('M1 11h4v4H1zM6 6h3v3H6zM12 1h3v3h-3z'),
  columns: p('M.5 5.500h5v10h-5zM5.500.5h5v15h-5zM10.500 3.500h5v12h-5z', '#a8141c', '#300'),
  multi: p('M1.500 1v5h5M9.500 1v5h5M1.500 9v5h5M9.500 9v5h5M2 5l4-3M10 2l4 3M2 13l4-3M10 10l4 3', 'none', N),
  boxred: p('M8 0v16M4 1.500h8M4 14.500h8', 'none', R, 1) + p('M3.500 5.500h9v5h-9z', '#e66', R) + p('M3 8h10', 'none', R),
  area: f('M0 2l8 9 8-6v10H0z', '#111') + f('M0 2l7 9-7 4z', R) + f('M6 11l4-7 4 6-4 3z', '#20b830'),
  polar: c(9, 8, 6) + p('M1.500 0v16M0 2h2M0 6h2M0 10h2M0 14h2M8 12V5M8 7q2-3 3-1'),
  candle: p('M4 1v3M4 10v4M1.500 4.500h4v6h-4z', '#fff') + p('M11.500 1v14', 'none', R) + f('M9 4h5v9H9z', '#d01020'),
  stack: p('M5.500 3.500l2-2h3l1 1h4v8h-10z', '#f0e060', '#540') + p('M3.500 5.500l2-2h3l1 1h4v8h-10z', '#f0e060', '#540') + p('M1.500 6.500h4l1 1h5v7l-10-1z', '#f6ec80', '#540'),
  bars3d: p('M.5 6.500l4-5h10v9l-4 5H.5z', '#eee') + f('M3 6h2v9H3zM6 4h2v9H6zM10 5h3v8h-3z', '#557') + p('M3 15V6M10 13V4'),
  surface: p('M.5 6.500l5-5h10v7l-5 6H.5z', '#f0e040') + f('M6 2h9l-3 4H2z', '#d8232a') + f('M1 10q6 1 14-5v4l-5 3H1z', '#30b050') + f('M1 12h9l5-3-4 5H1z', '#2040c0'),
  scatter3d: p('M.5 6.500l4-5h11v8l-5 6H.5zM.5 6.500h10v9M10.500 6.500l5-5', '#fff') + f('M4 9h2v2H4zM7 12h2v2H7zM9 3h2v2H9zM12 7h2v2h-2z', '#3344b0'),
  contour: f('M0 0h16v16H0z', '#4edb40') + c(4, 4, 1.5, R, '#e8e020') + c(12, 5, 1.5, R, '#e8e020') + c(5, 12, 1.5, R, '#e8e020') + c(12, 12, 1.5, '#248', '#163'),
  profile: p('M1 5l3-4 4 4 4-4 3 4', 'none', R) + p('M.5 7.500h15v8H.5z', '#4edb40') + c(5, 12, 1.5, R, '#e8e020') + c(11, 12, 1.5, R, '#e8e020'),
  grayimg: p('M.5.5h15v15H.5z', '#b4b8c0', G),
  cat: p('M2.500 11.500v-11l3 3h5l3-3v11z', '#fff') + f('M5 5h2v2H5zM9 5h2v2H9z') + p('M5 9l3 1 3-1') + f('M0 13h4v3H0zM6 13h4v3H6zM12 13h4v3h-4z', R),
  graycat: p('M2.500 11.500v-11l3 3h5l3-3v11zM3 3l10 8M13 3L3 11', '#ddd', G) + f('M0 13h4v3H0zM6 13h4v3H6zM12 13h4v3h-4z', G),
  shield: p('M2.500 2.500l3 1h5l3-1v8l-5 5-6-4z', '#c5c5cc', '#777') + f('M5 6h2v2H5zM9 6h2v2H9z', '#666'),
  measure: f('M0 4h3v3H0zM4 4h3v3H4zM8 4h3v3H8zM0 11h3v3H0zM5 11h3v3H5z', G) + p('M13.500 1v14M11 4l2.500-3L16 4M11 12l2.500 3 2.500-3', 'none', G),
};

const button = name => {
  const def = icons[name] || icons.line;
  const art = def.html || `<svg width="16" height="16" viewBox="0 0 16 16">${def}</svg>`;
  return `<button class="tool${name === 'cursor' ? ' on' : ''}" aria-label="${name}">${art}</button>`;
};
const tool = token => {
  if (token === '|') return '<i class="sep"></i>';
  const name = token.replace('*', '');
  return button(name) + (token.endsWith('*') ? `<button class="arrow" aria-label="${name} options"></button>` : '');
};
document.querySelectorAll('.tools').forEach(el => {
  el.innerHTML = el.dataset.tools.split(' ').map(tool).join('');
});
document.querySelectorAll('.vbar[data-tools]').forEach(el => {
  el.insertAdjacentHTML('afterbegin', el.dataset.tools.split(' ').map(t => `<div class="line">${tool(t)}</div>`).join(''));
});
document.querySelectorAll('.cap.more').forEach(el => {
  el.innerHTML = '<svg width="8" height="5"><path d="M0 0l3 2.500L0 5zM4 0l3 2.500L4 5z"/></svg>';
});

const temps = [-1.7, -2.2, -1.1, -2.8, -1.1, -0.6, -3.3, -4.4, -5.6, -3.3, -2.2, -6.1, -1.1, -6.1, -2.8, 2.2, 6.7, 2.2, -6.1, -5.6, -6.7, -7.2];
document.getElementById('rows').insertAdjacentHTML('beforeend', temps.map((t, i) =>
  `<tr><th>${i + 1}</th><td>1970-01-${String(i + 1).padStart(2, '0')}</td><td>${t.toFixed(1)}</td></tr>`).join(''));

let seed = 7;
const rnd = () => (seed = (seed * 16807) % 2147483647) / 2147483647;

/* Yearly extremes in plot pixels: summer peaks and winter troughs. */
const peaks = [56, 69, 56, 61, 68, 62, 62, 63, 62, 63, 73, 68, 66, 62, 67, 72, 62, 75, 62, 65, 59, 75, 69];
const troughs = [205, 212, 214, 210, 216, 208, 219, 215, 217, 223, 219, 208, 210, 213, 204, 210, 212, 205, 204, 228, 221, 215, 210, 192];
let d = '';
for (let x = 0; x < 355; x++) {
  const t = (x + 8.5) / 15.67;
  const summer = (1 - Math.cos((t - 0.03) * 2 * Math.PI)) / 2;
  const year = Math.floor(t), w = Math.round(t);
  const pk = peaks[Math.min(year, 22)], tr = troughs[Math.min(w, 23)];
  let top = 144 - (144 - pk - 15) * Math.pow(summer, 0.7) - rnd() * 16 + 8;
  let bottom = 118 + (tr - 118 - 22) * Math.pow(1 - summer, 0.75) + rnd() * 20 - 6;
  if (summer > 0.98) top = pk + rnd() * 3;
  if (summer < 0.02) bottom = tr - rnd() * 3;
  d += `M${x}.5 ${Math.round(top)}V${Math.round(bottom)}`;
}
document.getElementById('plot').innerHTML =
  `<path d="${d}" stroke="#000"/><path d="M0 247.500h356M53.500 247v4M194.500 247v4M335.500 247v4M123.500 247v2M264.500 247v2" stroke="#000"/>` +
  '<text x="53" y="261">1979-01-01</text><text x="194" y="261">1988-01-01</text><text x="335" y="261">1997-01-01</text><text class="axis" x="334" y="278">DATE</text>';

let s = '';
for (let x = 5; x < 49; x++) s += `M${x}.5 ${6 + Math.round(rnd() * 3)}V${24 + Math.round(rnd() * 4)}`;
document.getElementById('spark').innerHTML = `<path d="${s}" stroke="#061824"/>`;
```
